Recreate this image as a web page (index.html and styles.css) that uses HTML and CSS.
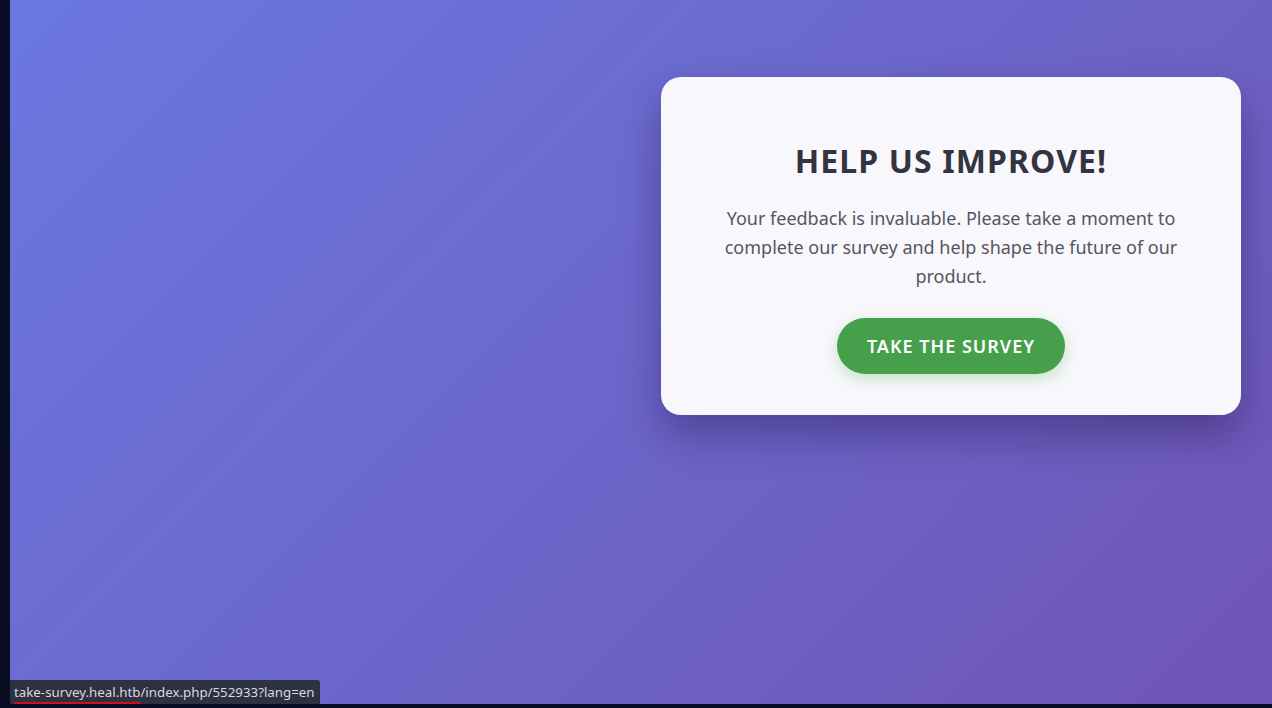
FILE: index.html
```html
<!DOCTYPE html>
<html lang="en">
<head>
<meta charset="utf-8">
<title>Take Survey</title>
<link rel="stylesheet" href="styles.css">
</head>
<body>
<div class="frame">
  <div class="side-strip"></div>
  <div class="viewport">
    <main class="page">
      <div class="spacer"></div>
      <section class="card">
        <h1 class="card-title">HELP US IMPROVE!</h1>
        <p class="card-text">Your feedback is invaluable. Please take a moment to complete our survey and help shape the future of our product.</p>
        <a class="survey-btn" href="#">TAKE THE SURVEY</a>
      </section>
    </main>
    <div class="bottom-line"></div>
    <div class="status-tip"><span class="status-host">take-survey.heal.htb</span>/index.php/552933?lang=en</div>
  </div>
</div>
</body>
</html>
```

FILE: styles.css
```css
html, body {
  margin: 0;
  padding: 0;
  height: 100%;
}
body {
  font-family: "Noto Sans", "Open Sans", sans-serif;
  background: #0a0e24;
  overflow: hidden;
}
.frame {
  display: flex;
  height: 708px;
}
.side-strip {
  width: 10px;
  flex: 0 0 10px;
  background: #0a0e24;
}
.viewport {
  position: relative;
  flex: 1;
  display: flex;
  flex-direction: column;
}
.page {
  flex: 1;
  background: linear-gradient(135deg, #6a78e0 0%, #6f55b5 100%);
  display: grid;
  grid-template-columns: 1fr 580px;
  align-items: start;
  padding: 77px 31px 0 0;
}
.bottom-line {
  height: 4px;
  background: #0a0e24;
}
.card {
  background: #f8f8fc;
  border-radius: 20px;
  box-shadow: 0 20px 40px rgba(20, 10, 60, 0.35);
  padding: 65px 40px 41px;
  text-align: center;
  box-sizing: border-box;
  height: 338px;
}
.card-title {
  margin: 0 0 24px;
  font-size: 32px;
  line-height: 1.2;
  font-weight: 700;
  letter-spacing: 1.1px;
  color: #33343f;
}
.card-text {
  margin: 0 0 27px;
  font-size: 18px;
  line-height: 1.6;
  color: #55555f;
  padding: 0 20px;
}
.survey-btn {
  display: inline-block;
  background: #46a04b;
  color: #ffffff;
  text-decoration: none;
  font-size: 18px;
  font-weight: 600;
  letter-spacing: 1px;
  line-height: 26px;
  padding: 15px 30px;
  border-radius: 30px;
  box-shadow: 0 5px 15px rgba(76, 175, 80, 0.3);
}
.status-tip {
  position: absolute;
  left: 0;
  bottom: 4px;
  height: 24px;
  padding: 0 5px 0 4px;
  background: #2e3140;
  color: #d8d9de;
  font-family: "Noto Sans", sans-serif;
  font-size: 13.3px;
  line-height: 24px;
  border-top-right-radius: 3px;
  white-space: nowrap;
}
.status-host {
  text-decoration: underline;
  text-decoration-color: #d0101e;
  text-decoration-thickness: 2px;
  text-underline-offset: 5px;
}
```
